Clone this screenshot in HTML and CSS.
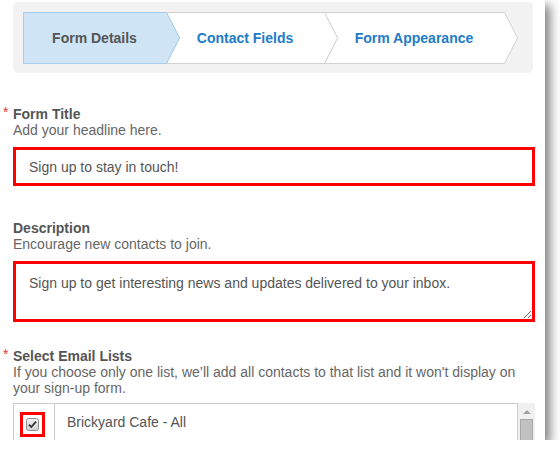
FILE: index.html
```html
<!DOCTYPE html>
<html lang="en">
<head>
  <meta charset="UTF-8">
  <meta name="viewport" content="width=device-width, initial-scale=1.0">
  <title>Sign-up Form</title>
  <link rel="stylesheet" href="styles.css">
</head>
<body>
  <div class="window">
    <div class="steps-panel">
      <div class="steps">
        <svg class="steps-bg" width="496" height="52" viewBox="0 0 496 52">
          <polygon points="301.5,0.5 481.5,0.5 494.5,26 481.5,51.5 301.5,51.5 314.5,26" fill="#fff" stroke="#d2d2d2"/>
          <polygon points="143.5,0.5 301.5,0.5 314.5,26 301.5,51.5 143.5,51.5 156.5,26" fill="#fff" stroke="#d2d2d2"/>
          <polygon points="0.5,0.5 143.5,0.5 156.5,26 143.5,51.5 0.5,51.5" fill="#cfe4f5" stroke="#a9cde9"/>
        </svg>
        <span class="step step-details active">Form Details</span>
        <span class="step step-contact">Contact Fields</span>
        <span class="step step-appearance">Form Appearance</span>
      </div>
    </div>

    <div class="field field-title">
      <div class="field-label"><span class="req">*</span>Form Title</div>
      <div class="hint">Add your headline here.</div>
      <input type="text" class="text-input" value="Sign up to stay in touch!">
    </div>

    <div class="field field-desc">
      <div class="field-label">Description</div>
      <div class="hint">Encourage new contacts to join.</div>
      <textarea class="text-area">Sign up to get interesting news and updates delivered to your inbox.</textarea>
    </div>

    <div class="field field-lists">
      <div class="field-label"><span class="req">*</span>Select Email Lists</div>
      <div class="hint">If you choose only one list, we’ll add all contacts to that list and it won't display on your sign-up form.</div>
      <div class="list-wrap">
        <div class="list">
          <div class="list-row">
            <div class="check-cell">
              <span class="check-mark">
                <svg width="13" height="13" viewBox="0 0 13 13">
                  <defs>
                    <linearGradient id="cb" x1="0" y1="0" x2="0" y2="1">
                      <stop offset="0" stop-color="#f2f2f2"/>
                      <stop offset="1" stop-color="#cfcfcf"/>
                    </linearGradient>
                  </defs>
                  <rect x="0.5" y="0.5" width="12" height="12" rx="2" fill="url(#cb)" stroke="#8f8f8f"/>
                  <path d="M3 6.6 L5.3 9 L10 3.6" fill="none" stroke="#333" stroke-width="1.8"/>
                </svg>
              </span>
            </div>
            <div class="list-name">Brickyard Cafe - All</div>
          </div>
        </div>
        <div class="scrollbar">
          <span class="scroll-arrow"></span>
          <span class="scroll-thumb"></span>
        </div>
      </div>
    </div>
  </div>
</body>
</html>
```

FILE: styles.css
```css
* {
  box-sizing: border-box;
}
body {
  margin: 0;
  background: #fff;
  font-family: "Liberation Sans", Arial, sans-serif;
  font-size: 14px;
  color: #555;
}
.window {
  width: 545px;
  height: 440px;
  padding: 2px 10px 0 13px;
  background: #fff;
  overflow: hidden;
  box-shadow: 5px 5px 10px rgba(0,0,0,0.5);
}

/* stepper */
.steps-panel {
  width: 520px;
  height: 71px;
  padding: 10px;
  background: #f2f2f2;
  border-radius: 5px;
}
.steps {
  position: relative;
  display: flex;
  width: 496px;
  height: 52px;
}
.steps-bg {
  position: absolute;
  left: 0;
  top: 0;
}
.step {
  position: relative;
  line-height: 52px;
  text-align: center;
  font-weight: bold;
  color: #1c7cc8;
}
.step.active {
  color: #555;
}
.step-details {
  width: 143px;
}
.step-contact {
  width: 158px;
}
.step-appearance {
  width: 180px;
}

/* fields */
.field-label {
  font-weight: bold;
  line-height: 16px;
  color: #555;
}
.req {
  display: inline-block;
  width: 10px;
  margin-left: -10px;
  color: #e8382f;
  font-weight: normal;
  position: relative;
  top: -2px;
}
.hint {
  line-height: 16px;
  color: #666;
}
.field-title {
  margin-top: 33px;
}
.field-desc {
  margin-top: 34px;
}
.field-lists {
  margin-top: 26px;
}
.text-input,
.text-area {
  display: block;
  width: 100%;
  margin-top: 9px;
  border: 3px solid #f00;
  font-family: inherit;
  font-size: 14px;
  color: #555;
  background: #fff;
  outline: none;
}
.text-input {
  height: 39px;
  padding: 0 13px;
}
.text-area {
  height: 61px;
  padding: 11px 13px 0;
  line-height: 16px;
  resize: both;
}

/* email lists */
.list-wrap {
  display: flex;
  margin-top: 7px;
}
.list {
  flex: 1;
  border: 1px solid #ccc;
}
.list-row {
  display: flex;
  height: 40px;
}
.check-cell {
  width: 41px;
  padding: 8px 0 0 6px;
  border-right: 1px solid #ccc;
}
.check-mark {
  display: flex;
  align-items: center;
  justify-content: center;
  width: 25px;
  height: 25px;
  border: 3px solid #f00;
}
.check-mark svg {
  display: block;
}
.list-name {
  padding: 10px 0 0 12px;
  line-height: 16px;
}
.scrollbar {
  display: flex;
  flex-direction: column;
  align-items: center;
  width: 17px;
  background: #f0f0f0;
}
.scroll-arrow {
  margin-top: 7px;
  width: 0;
  height: 0;
  border-left: 4px solid transparent;
  border-right: 4px solid transparent;
  border-bottom: 4px solid #a3a3a3;
}
.scroll-thumb {
  margin-top: 5px;
  width: 13px;
  height: 30px;
  background: #c1c1c1;
  border: 1px solid #a8a8a8;
}
```
